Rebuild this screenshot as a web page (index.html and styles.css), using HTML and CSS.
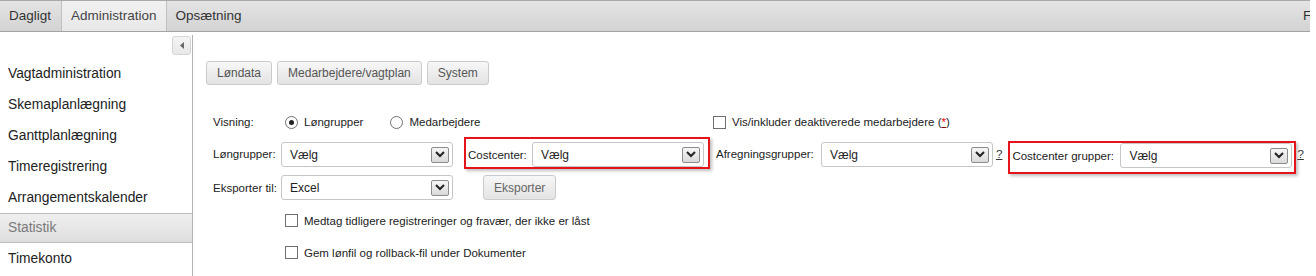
FILE: index.html
```html
<!DOCTYPE html>
<html lang="da">
<head>
    <meta charset="UTF-8">
    <title>Administration - Statistik</title>
    <link rel="stylesheet" href="styles.css">
</head>
<body>
<div class="page">
    <div class="topbar">
        <div class="tab">Dagligt</div>
        <div class="tab active">Administration</div>
        <div class="tab">Opsætning</div>
        <div class="spacer"></div>
        <div class="user">F</div>
    </div>

    <div class="main">
        <div class="sidebar">
            <div class="collapse-row">
                <button class="collapse">
                    <svg width="4" height="7" viewBox="0 0 4 7"><polygon points="4,0 0,3.5 4,7" fill="#666"/></svg>
                </button>
            </div>
            <ul class="menu">
                <li>Vagtadministration</li>
                <li>Skemaplanlægning</li>
                <li>Ganttplanlægning</li>
                <li>Timeregistrering</li>
                <li>Arrangementskalender</li>
                <li class="selected">Statistik</li>
                <li>Timekonto</li>
            </ul>
        </div>

        <div class="content">
            <div class="subtabs">
                <button class="btn">Løndata</button>
                <button class="btn">Medarbejdere/vagtplan</button>
                <button class="btn">System</button>
            </div>

            <div class="form">
                <div class="row row-visning">
                    <span class="label">Visning:</span>
                    <div class="radios">
                        <span class="radio checked"></span>
                        <span class="opt">Løngrupper</span>
                        <span class="radio second"></span>
                        <span class="opt">Medarbejdere</span>
                    </div>
                    <span class="check"></span>
                    <span class="opt">Vis/inkluder deaktiverede medarbejdere (<a class="star" href="#">*</a>)</span>
                </div>

                <div class="row row-selects">
                    <span class="label">Løngrupper:</span>
                    <div class="select"><span>Vælg</span><span class="arrow"><svg width="10" height="7" viewBox="0 0 10 7"><polyline points="1,1 5,5 9,1" fill="none" stroke="#222" stroke-width="2"/></svg></span></div>

                    <div class="marked marked-cost">
                        <span class="label label-cost">Costcenter:</span>
                        <div class="select"><span>Vælg</span><span class="arrow"><svg width="10" height="7" viewBox="0 0 10 7"><polyline points="1,1 5,5 9,1" fill="none" stroke="#222" stroke-width="2"/></svg></span></div>
                    </div>

                    <span class="label label-afr">Afregningsgrupper:</span>
                    <div class="select"><span>Vælg</span><span class="arrow"><svg width="10" height="7" viewBox="0 0 10 7"><polyline points="1,1 5,5 9,1" fill="none" stroke="#222" stroke-width="2"/></svg></span></div>
                    <a class="help" href="#">?</a>

                    <div class="marked marked-group">
                        <span class="label label-group">Costcenter grupper:</span>
                        <div class="select"><span>Vælg</span><span class="arrow"><svg width="10" height="7" viewBox="0 0 10 7"><polyline points="1,1 5,5 9,1" fill="none" stroke="#222" stroke-width="2"/></svg></span></div>
                    </div>
                    <a class="help help-last" href="#">?</a>
                </div>

                <div class="row row-export">
                    <span class="label">Eksporter til:</span>
                    <div class="select"><span>Excel</span><span class="arrow"><svg width="10" height="7" viewBox="0 0 10 7"><polyline points="1,1 5,5 9,1" fill="none" stroke="#222" stroke-width="2"/></svg></span></div>
                    <button class="btn btn-export">Eksporter</button>
                </div>

                <div class="row row-check">
                    <span class="check"></span>
                    <span class="opt">Medtag tidligere registreringer og fravær, der ikke er låst</span>
                </div>

                <div class="row row-check second-check">
                    <span class="check"></span>
                    <span class="opt">Gem lønfil og rollback-fil under Dokumenter</span>
                </div>
            </div>
        </div>
    </div>
</div>
</body>
</html>
```

FILE: styles.css
```css
body {
    margin: 0;
    font-family: 'Liberation Sans', Arial, sans-serif;
    color: #333;
    background-color: #fff;
}

.page {
    width: 1310px;
    height: 276px;
    overflow: hidden;
}

/* top menu */
.topbar {
    display: flex;
    height: 30px;
    border-top: 1px solid #a9a9a9;
    border-bottom: 1px solid #a3a3a3;
    background: linear-gradient(#e4e4e4, #d3d3d3);
    font-size: 13.5px;
    line-height: 30px;
}

.tab {
    padding: 0 9px;
    color: #333;
    border-right: 1px solid transparent;
}

.tab.active {
    background: linear-gradient(#f1f1f1, #e8e8e8);
    border-left: 1px solid #c0c0c0;
    border-right: 1px solid #c0c0c0;
    color: #444;
}

.spacer {
    flex: 1;
}

.user {
    width: 7px;
    overflow: hidden;
    color: #333;
}

/* sidebar */
.main {
    display: flex;
    height: 244px;
}

.sidebar {
    width: 192px;
    flex-shrink: 0;
    margin-top: 3px;
    border-right: 1px solid #b3b3b3;
}

.collapse-row {
    display: flex;
    justify-content: flex-end;
    padding: 1px 1px 0 0;
    margin-bottom: 3px;
}

.collapse {
    width: 19px;
    height: 19px;
    padding: 0;
    border: 1px solid #d4d4d4;
    border-radius: 3px;
    background: linear-gradient(#f4f4f4, #e8e8e8);
    display: flex;
    align-items: center;
    justify-content: center;
}

.menu {
    list-style: none;
    margin: 0;
    padding: 0;
    font-size: 13.8px;
}

.menu li {
    height: 31px;
    line-height: 31px;
    padding-left: 8px;
    color: #222;
}

.menu li.selected {
    box-sizing: border-box;
    height: 30px;
    line-height: 28px;
    color: #7a7a7a;
    background: linear-gradient(#efefef, #dedede);
    border-top: 1px solid #bdbdbd;
    border-bottom: 1px solid #bdbdbd;
}

/* content */
.content {
    flex: 1;
    padding: 29px 0 0 13px;
    font-size: 11.5px;
}

.subtabs {
    display: flex;
    gap: 5px;
}

.btn {
    box-sizing: border-box;
    height: 24px;
    padding: 0 10px;
    border: 1px solid #cbcbcb;
    border-radius: 3px;
    background: linear-gradient(#f7f7f7, #e3e3e3);
    color: #555;
    font-family: 'Liberation Sans', Arial, sans-serif;
    font-size: 12px;
}

.form {
    padding-left: 7px;
    margin-top: 28px;
}

.row {
    display: flex;
    align-items: center;
}

.label {
    width: 68px;
    flex-shrink: 0;
    color: #222;
}

.opt {
    color: #222;
}

.row-visning {
    height: 18px;
}

.radios {
    width: 432px;
    display: flex;
    align-items: center;
}

.radio {
    box-sizing: border-box;
    width: 13px;
    height: 13px;
    margin: 0 6px 0 4px;
    border: 1px solid #6f6f6f;
    border-radius: 50%;
    background: #fff;
    display: flex;
    align-items: center;
    justify-content: center;
}

.radio.checked::after {
    content: "";
    width: 5px;
    height: 5px;
    border-radius: 50%;
    background: #222;
}

.radio.second {
    margin-left: 27px;
}

.check {
    box-sizing: border-box;
    width: 13px;
    height: 13px;
    margin-right: 6px;
    border: 1px solid #6f6f6f;
    background: #fff;
    flex-shrink: 0;
}

.star {
    color: #e00;
    text-decoration: underline;
    text-decoration-color: #800;
}

/* selects */
.row-selects {
    height: 25px;
    margin-top: 11px;
    align-items: flex-start;
}

.select {
    box-sizing: border-box;
    width: 172px;
    height: 25px;
    flex-shrink: 0;
    padding: 0 3px 0 8px;
    border: 1px solid #c6c6c6;
    border-radius: 3px;
    background: #fff;
    display: flex;
    align-items: center;
    justify-content: space-between;
    color: #222;
    font-size: 12px;
}

.arrow {
    box-sizing: border-box;
    width: 18px;
    height: 16px;
    border: 1px solid #8c8c8c;
    border-radius: 2px;
    background: linear-gradient(#f6f6f6, #dadada);
    display: flex;
    align-items: center;
    justify-content: center;
}

.row-selects > .label,
.row-selects > .help {
    line-height: 25px;
}

.marked {
    display: flex;
    align-items: center;
    border: 2px solid #e5141a;
    box-shadow: 2px 2px 3px rgba(0, 0, 0, 0.25);
    flex-shrink: 0;
}

.marked-cost {
    margin: -5px 0 0 11px;
    padding: 3px 4px 0 2px;
}

.label-cost {
    width: 64px;
}

.label-afr {
    width: 105px;
    margin-left: 6px;
}

.help {
    margin-left: 3px;
    color: #333;
    text-decoration: underline;
}

.marked-group {
    margin: -1px 0 0 6px;
    padding: 0 2px 4px 2px;
}

.label-group {
    width: 108px;
}

.help-last {
    margin-left: 1px;
}

.row-export {
    height: 25px;
    margin-top: 8px;
}

.btn-export {
    height: 25px;
    margin-left: 30px;
    padding: 0 10px;
    color: #666;
}

.row-check {
    height: 13px;
    margin-top: 14px;
    padding-left: 72px;
}

.second-check {
    margin-top: 19px;
}
```
